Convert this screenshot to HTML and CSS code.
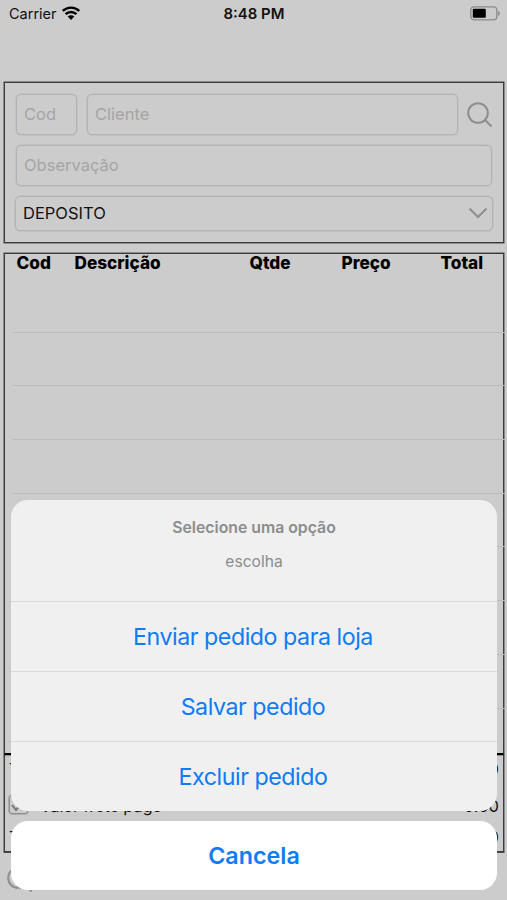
FILE: index.html
```
<!DOCTYPE html>
<html lang="pt-BR">
<head>
    <meta charset="UTF-8">
    <meta name="viewport" content="width=device-width, initial-scale=1.0">
    <title>Pedido</title>
    <link rel="stylesheet" href="styles.css">
</head>
<body>
    <div class="screen">
        <header class="status">
            <div class="carrier">
                <span>Carrier</span>
                <svg class="wifi" width="18" height="14" viewBox="0 0 18 14">
                    <path d="M.8 5a11.7 11.7 0 0 1 16.4 0M3.6 8.2a7.6 7.6 0 0 1 10.8 0" fill="none" stroke="#000" stroke-width="2.4"/>
                    <path d="M5.7 10.6a4.7 4.7 0 0 1 6.6 0L9 14z"/>
                </svg>
            </div>
            <div class="clock">8:48 PM</div>
            <svg class="battery" width="31" height="15" viewBox="0 0 31 15">
                <rect x=".8" y=".8" width="26" height="13" rx="3.2" fill="none" stroke="#8b8b8b" stroke-width="1.3"/>
                <rect x="2.8" y="2.8" width="13" height="9" rx="1" fill="#000"/>
                <path d="M28 5c2.4 1 2.4 4 0 5z" fill="#8b8b8b"/>
            </svg>
        </header>

        <form class="panel form">
            <div class="row">
                <div class="field cod">Cod</div>
                <div class="field cliente">Cliente</div>
                <svg class="search" width="26" height="26" viewBox="0 0 26 26">
                    <circle cx="11" cy="11" r="9.8"/>
                    <path d="M18 18l6.5 6.5"/>
                </svg>
            </div>
            <div class="field">Observação</div>
            <div class="field select">
                <span>DEPOSITO</span>
                <svg width="20" height="12" viewBox="0 0 20 12">
                    <path d="M1.5 1.5l8.5 8.5 8.5-8.5"/>
                </svg>
            </div>
        </form>

        <div class="panel list">
            <div class="head">
                <span>Cod</span>
                <span>Descrição</span>
                <span>Qtde</span>
                <span>Preço</span>
                <span>Total</span>
            </div>
            <div class="lines">
                <div class="line"></div>
                <div class="line"></div>
                <div class="line"></div>
                <div class="line"></div>
                <div class="line"></div>
                <div class="line"></div>
                <div class="line"></div>
                <div class="line"></div>
            </div>
        </div>

        <div class="totals">
            <div class="total"><span>Total</span><span>0.00</span></div>
            <div class="total">
                <span class="check"><svg width="20" height="20" viewBox="0 0 20 20"><path d="M2 9l4 5 8-9"/></svg></span>
                <span class="frete">Valor frete pago</span>
                <span>0.00</span>
            </div>
            <div class="total"><span>Total</span><span>0.00</span></div>
        </div>
        <footer class="toolbar">
            <svg class="search" width="26" height="26" viewBox="0 0 26 26">
                <circle cx="11" cy="11" r="9.8"/>
                <path d="M18 18l6.5 6.5"/>
            </svg>
        </footer>

        <!-- action sheet -->
        <div class="sheet">
            <div class="options">
                <div class="message">
                    <div class="title">Selecione uma opção</div>
                    <div class="subtitle">escolha</div>
                </div>
                <div class="option">Enviar pedido para loja</div>
                <div class="option">Salvar pedido</div>
                <div class="option">Excluir pedido</div>
            </div>
            <div class="cancel">Cancela</div>
        </div>
    </div>
</body>
</html>
```
FILE: styles.css
```
* {
    box-sizing: border-box;
}
body {
    margin: 0;
    font-family: Inter, "Liberation Sans", sans-serif;
    background: #cccccc;
    color: #111;
}
.screen {
    position: relative;
    width: 507px;
    height: 900px;
    overflow: hidden;
}
.status {
    display: grid;
    grid-template-columns: 1fr auto 1fr;
    align-items: center;
    height: 27px;
    padding: 0 6px 0 9px;
    margin-bottom: 55px;
    font-size: 14.5px;
}
.carrier {
    display: flex;
    align-items: center;
    gap: 5px;
}
.wifi {
    margin-top: -2px;
}
.clock {
    margin-right: 2px;
    font-size: 14.9px;
    font-weight: 600;
}
.battery {
    justify-self: end;
}
.panel {
    margin: 0 3px 0 4px;
    border: 1px solid #3c3c3c;
    box-shadow: 0 0 0 0.5px #4a4a4a;
}
.form {
    display: flex;
    flex-direction: column;
    gap: 10px;
    height: 161px;
    padding: 11px 11px 0;
}
.row {
    display: flex;
    align-items: center;
    gap: 10px;
}
.field {
    display: flex;
    align-items: center;
    flex-shrink: 0;
    height: 41px;
    padding: 0 7px 1px;
    border: 1px solid #b3b3b3;
    border-radius: 5px;
    box-shadow: 0 0 0 0.5px #b9b9b9;
    color: #a5a5a5;
    font-size: 16.5px;
}
.cod {
    width: 61px;
}
.cliente {
    width: 371px;
}
.search,
.select svg {
    flex-shrink: 0;
    fill: none;
    stroke: #8e8e8e;
    stroke-width: 2;
}
.row .search {
    margin-left: -1px;
}
.select {
    justify-content: space-between;
    height: 35px;
    padding: 0 4px 1px 7px;
    margin-right: -1px;
    margin-left: -1px;
    color: #111;
}
.list {
    height: 502px;
    margin-top: 10px;
    border-bottom: 2px solid #000;
}
.head {
    display: grid;
    grid-template-columns: 58px 175px 92px 99px auto;
    height: 25px;
    padding-left: 11.5px;
    line-height: 18px;
    font-size: 17.2px;
    font-weight: 800;
    color: #000;
}
.lines {
    margin: 0 -3px 0 7px;
}
.line {
    height: 53.7px;
    border-bottom: 1px solid #bdbdbd;
}
.totals {
    height: 97px;
    margin: 0 3px 0 4px;
    padding: 0 4px;
    border: 1px solid #3c3c3c;
    border-top: none;
    box-shadow: 0 0.5px 0 0.5px #4a4a4a;
    font-size: 16.5px;
}
.total {
    display: flex;
    align-items: center;
    justify-content: space-between;
    height: 47px;
}
.total:first-child {
    height: 27px;
}
.total:last-child {
    height: 16px;
}
.check {
    width: 19px;
    height: 19px;
    margin-top: -2px;
    border: 1px solid #8e8e8e;
    border-radius: 3px;
    box-shadow: 0 0 0 0.5px #8e8e8e;
}
.check svg {
    display: block;
    fill: none;
    stroke: #777;
    stroke-width: 2;
}
.frete {
    flex: 1;
    margin-left: 12px;
    letter-spacing: -0.2px;
}
.toolbar {
    padding: 15px 7px;
}
.sheet {
    position: absolute;
    left: 11px;
    right: 10px;
    bottom: 10px;
    text-align: center;
    color: #0f7bf5;
}
.options {
    height: 311px;
    margin-bottom: 10px;
    border-radius: 17px;
    background: #f0f0f0;
}
.message {
    height: 101px;
    padding-top: 18px;
    color: #8c8c8c;
    line-height: 20px;
}
.title {
    font-size: 15.8px;
    font-weight: 600;
}
.subtitle {
    margin-top: 14px;
    font-size: 15.6px;
}
.option {
    height: 70px;
    padding-right: 2px;
    border-top: 1px solid #dadada;
    font-size: 23.2px;
    letter-spacing: -0.45px;
    line-height: 70px;
}
.cancel {
    height: 69px;
    border-radius: 17px;
    background: #fff;
    font-size: 23.3px;
    font-weight: 600;
    line-height: 70px;
}
```
